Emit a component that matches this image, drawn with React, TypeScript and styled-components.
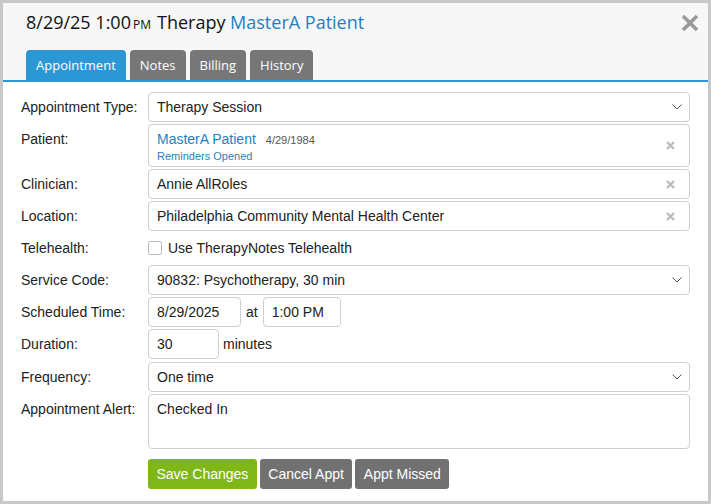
import React from 'react';
import styled, { createGlobalStyle } from 'styled-components';

const GlobalStyle = createGlobalStyle`
  html, body {
    margin: 0;
    padding: 0;
  }
  body {
    font-family: 'Liberation Sans', Arial, sans-serif;
    color: #222;
  }
  * {
    box-sizing: border-box;
  }
`;

const Dialog = styled.div`
  width: 711px;
  height: 504px;
  border: 3px solid #c8c8c8;
  background: #fff;
  display: flex;
  flex-direction: column;
`;

const Header = styled.div`
  background: #f7f7f7;
  border-bottom: 2px solid #2b98d5;
  padding: 8px 9px 0 23px;
`;

const TitleRow = styled.div`
  display: flex;
  align-items: center;
  justify-content: space-between;
  height: 24px;
`;

const Title = styled.div`
  font-family: 'Open Sans', sans-serif;
  font-size: 18px;
  line-height: 24px;
  color: #111;
  white-space: nowrap;
`;

const Meridiem = styled.span`
  font-size: 12px;
  margin: 0 6px 0 2px;
`;

const PatientLink = styled.span`
  color: #1f7fbf;
`;

const CloseButton = styled.button`
  border: none;
  background: none;
  padding: 0;
  width: 18px;
  height: 18px;
  display: flex;
  cursor: pointer;
`;

const Tabs = styled.div`
  display: flex;
  gap: 4px;
  margin-top: 15px;
`;

const Tab = styled.div<{ $active?: boolean }>`
  height: 30px;
  padding: 0 10px;
  display: flex;
  align-items: center;
  font-family: 'Open Sans', sans-serif;
  font-size: 13px;
  color: #fff;
  border-radius: 4px 4px 0 0;
  background: ${(p) => (p.$active ? '#2b98d5' : '#777')};
`;

const Body = styled.div`
  padding: 10px 18px 0 18px;
  display: flex;
  flex-direction: column;
  gap: 2px;
`;

const Row = styled.div<{ $height?: number }>`
  display: grid;
  grid-template-columns: 127px 1fr;
  min-height: ${(p) => p.$height || 30}px;
`;

const Label = styled.div`
  font-size: 14px;
  line-height: 30px;
  color: #222;
  white-space: nowrap;
`;

const Box = styled.div<{ $height?: number; $width?: number }>`
  border: 1px solid #cfcfcf;
  border-radius: 4px;
  height: ${(p) => p.$height || 30}px;
  width: ${(p) => (p.$width ? `${p.$width}px` : 'auto')};
  padding: 0 8px;
  font-size: 14px;
  color: #222;
  display: flex;
  align-items: center;
  justify-content: space-between;
  background: #fff;
`;

const TextArea = styled(Box)`
  align-items: flex-start;
  padding-top: 6px;
`;

const PatientBox = styled(Box)`
  align-items: center;
`;

const PatientInfo = styled.div`
  display: flex;
  flex-direction: column;
  gap: 3px;
  margin-top: 1px;
`;

const PatientName = styled.div`
  display: flex;
  align-items: baseline;
  gap: 10px;
  color: #1f7fbf;
  font-size: 14px;
`;

const Dob = styled.span`
  font-size: 11px;
  color: #555;
`;

const Reminder = styled.div`
  font-size: 11px;
  color: #1f7fbf;
`;

const Inline = styled.div<{ $gap?: number }>`
  display: flex;
  align-items: flex-start;
  gap: ${(p) => p.$gap ?? 5}px;
  font-size: 14px;
`;

const CheckLine = styled.label`
  display: flex;
  align-items: center;
  gap: 6px;
  font-size: 14px;
`;

const Checkbox = styled.span`
  width: 14px;
  height: 14px;
  border: 1px solid #bbb;
  border-radius: 2px;
  background: #fff;
`;

const Buttons = styled.div`
  display: flex;
  gap: 3px;
  margin-top: 8px;
  padding-left: 127px;
`;

const Button = styled.button<{ $primary?: boolean }>`
  height: 30px;
  padding: 0 8.5px;
  border: none;
  border-radius: 3px;
  font-family: 'Liberation Sans', Arial, sans-serif;
  font-size: 14px;
  color: #fff;
  background: ${(p) => (p.$primary ? '#7fb719' : '#717171')};
  cursor: pointer;
`;

const Chevron = () => (
  <svg width="10" height="6" viewBox="0 0 10 6" style={{ marginRight: -1 }}>
    <path d="M0.5 0.5 L5 5 L9.5 0.5" fill="none" stroke="#555" strokeWidth="1" />
  </svg>
);

const ClearIcon = () => (
  <svg width="9" height="9" viewBox="0 0 9 9" style={{ marginRight: 6 }}>
    <path d="M1 1 L8 8 M8 1 L1 8" stroke="#bdbdbd" strokeWidth="2.4" strokeLinecap="butt" />
  </svg>
);

const CloseIcon = () => (
  <svg width="18" height="18" viewBox="0 0 18 18">
    <path d="M2 2 L16 16 M16 2 L2 16" stroke="#9a9a9a" strokeWidth="3.6" />
  </svg>
);

const App = (): JSX.Element => {
  return (
    <>
      <GlobalStyle />
      <Dialog>
        <Header>
          <TitleRow>
            <Title>
              8/29/25 1:00<Meridiem>PM</Meridiem>Therapy <PatientLink>MasterA Patient</PatientLink>
            </Title>
            <CloseButton aria-label="Close">
              <CloseIcon />
            </CloseButton>
          </TitleRow>
          <Tabs>
            <Tab $active>Appointment</Tab>
            <Tab>Notes</Tab>
            <Tab>Billing</Tab>
            <Tab>History</Tab>
          </Tabs>
        </Header>
        <Body>
          <Row>
            <Label>Appointment Type:</Label>
            <Box>
              Therapy Session
              <Chevron />
            </Box>
          </Row>
          <Row $height={43}>
            <Label>Patient:</Label>
            <PatientBox $height={43}>
              <PatientInfo>
                <PatientName>
                  MasterA Patient <Dob>4/29/1984</Dob>
                </PatientName>
                <Reminder>Reminders Opened</Reminder>
              </PatientInfo>
              <ClearIcon />
            </PatientBox>
          </Row>
          <Row>
            <Label>Clinician:</Label>
            <Box>
              Annie AllRoles
              <ClearIcon />
            </Box>
          </Row>
          <Row>
            <Label>Location:</Label>
            <Box>
              Philadelphia Community Mental Health Center
              <ClearIcon />
            </Box>
          </Row>
          <Row>
            <Label>Telehealth:</Label>
            <CheckLine>
              <Checkbox />
              Use TherapyNotes Telehealth
            </CheckLine>
          </Row>
          <Row>
            <Label>Service Code:</Label>
            <Box>
              90832: Psychotherapy, 30 min
              <Chevron />
            </Box>
          </Row>
          <Row>
            <Label>Scheduled Time:</Label>
            <Inline>
              <Box $width={93}>8/29/2025</Box>
              <Label>at</Label>
              <Box $width={78}>1:00 PM</Box>
            </Inline>
          </Row>
          <Row $height={31}>
            <Label>Duration:</Label>
            <Inline $gap={4}>
              <Box $width={71}>30</Box>
              <Label>minutes</Label>
            </Inline>
          </Row>
          <Row>
            <Label>Frequency:</Label>
            <Box>
              One time
              <Chevron />
            </Box>
          </Row>
          <Row $height={55}>
            <Label>Appointment Alert:</Label>
            <TextArea $height={55}>Checked In</TextArea>
          </Row>
          <Buttons>
            <Button $primary>Save Changes</Button>
            <Button>Cancel Appt</Button>
            <Button>Appt Missed</Button>
          </Buttons>
        </Body>
      </Dialog>
    </>
  );
};

export default App;
